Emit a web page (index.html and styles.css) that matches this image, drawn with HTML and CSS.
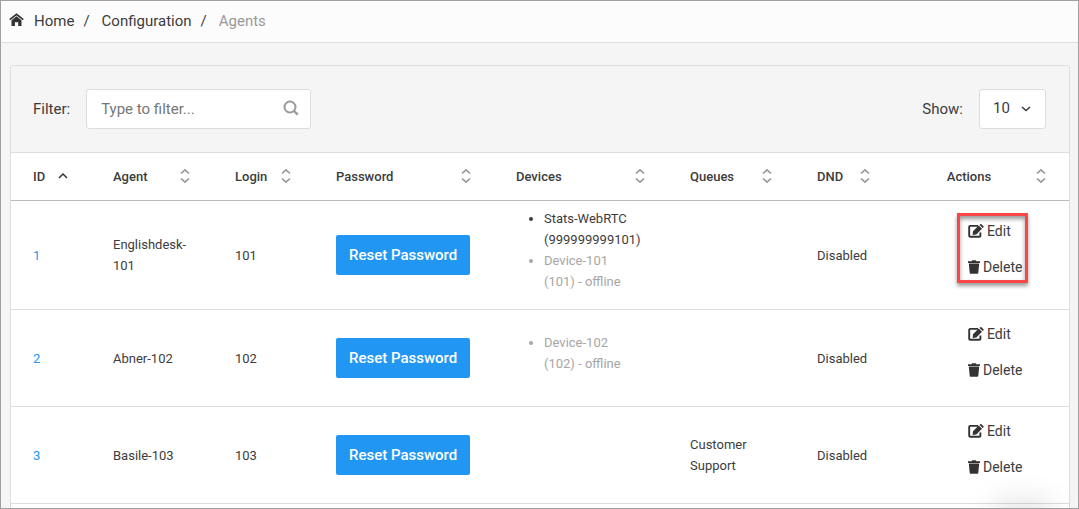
FILE: index.html
```html
<!DOCTYPE html>
<html lang="en">
<head>
<meta charset="utf-8">
<title>Agents</title>
<link rel="stylesheet" href="styles.css">
</head>
<body>
<svg class="defs" aria-hidden="true">
  <symbol id="sort" viewBox="0 0 20 16"><path d="M6 5.500l4-3.700 4 3.700M6 10.500l4 3.700 4-3.700" fill="none" stroke="currentColor" stroke-width="1.700"/></symbol>
  <symbol id="edit" viewBox="0 0 16 14"><path d="M10 1.900H2.200a1 1 0 0 0-1 1v8.900a1 1 0 0 0 1 1h9.200a1 1 0 0 0 1-1V8.500" fill="none" stroke="currentColor" stroke-width="1.900"/><path d="M4.600 10.900l.4-3.700L10.700 1.500l3.300 3.300L8.300 10.400zM11.500 .9l.8-.7a.8.8 0 0 1 1.100 0l2.100 2a.8.8 0 0 1 0 1.100l-.8.800z" fill="currentColor"/></symbol>
  <symbol id="trash" viewBox="0 0 12 14"><path d="M0 1.200h3.500L4.300.2h3.400l.8 1H12v1.700H0zM.8 3.600h10.400l-.9 9.200a1 1 0 0 1-1 .9H2.700a1 1 0 0 1-1-.9z" fill="currentColor"/></symbol>
</svg>
<div class="app">
  <nav class="breadcrumb" aria-label="Breadcrumb">
    <a class="crumb" href="#"><svg class="home" viewBox="0 0 15 14"><path d="M.7 6.700L7.500 1.300l6.800 5.400" fill="none" stroke="currentColor" stroke-width="1.700"/><path d="M2.500 7.300l5-4 5 4V13H9.200V9.300H5.900V13H2.500z" fill="currentColor"/></svg>Home</a>
    <span class="slash">/</span>
    <a class="crumb" href="#">Configuration</a>
    <span class="slash">/</span>
    <span class="current">Agents</span>
  </nav>
  <main class="card">
    <div class="toolbar">
      <label class="field">Filter:
        <span class="search">
          <input type="text" placeholder="Type to filter...">
          <svg class="glass" viewBox="0 0 16 16"><circle cx="7" cy="7" r="5.500" fill="none" stroke="currentColor" stroke-width="2"/><path d="M11 11l3.800 3.600" stroke="currentColor" stroke-width="2.400"/></svg>
        </span>
      </label>
      <label class="field">Show:
        <span class="length">
          <select><option>10</option><option>25</option><option>50</option></select>
          <svg class="caret" viewBox="0 0 10 6"><path d="M1 1l4 3.600L9 1" fill="none" stroke="currentColor" stroke-width="1.500"/></svg>
        </span>
      </label>
    </div>
    <table class="agents">
      <colgroup><col class="c-id"><col class="c-agent"><col class="c-login"><col class="c-password"><col class="c-devices"><col class="c-queues"><col class="c-dnd"><col class="c-actions"></colgroup>
      <thead>
        <tr>
          <th><div class="head sorted"><span>ID</span><svg class="sort" viewBox="0 0 20 16"><path d="M6 10l4-4 4 4" fill="none" stroke="currentColor" stroke-width="1.500"/></svg></div></th>
          <th><div class="head"><span>Agent</span><svg class="sort"><use href="#sort"/></svg></div></th>
          <th><div class="head"><span>Login</span><svg class="sort"><use href="#sort"/></svg></div></th>
          <th><div class="head"><span>Password</span><svg class="sort"><use href="#sort"/></svg></div></th>
          <th><div class="head"><span>Devices</span><svg class="sort"><use href="#sort"/></svg></div></th>
          <th><div class="head"><span>Queues</span><svg class="sort"><use href="#sort"/></svg></div></th>
          <th><div class="head"><span>DND</span><svg class="sort"><use href="#sort"/></svg></div></th>
          <th><div class="head centered"><span>Actions</span><svg class="sort"><use href="#sort"/></svg></div></th>
        </tr>
      </thead>
      <tbody>
        <tr>
          <td><a class="id" href="#">1</a></td>
          <td>Englishdesk-101</td>
          <td>101</td>
          <td><button class="reset" type="button">Reset Password</button></td>
          <td><ul class="devices"><li>Stats-WebRTC (999999999101)</li><li class="offline">Device-101<br>(101) - offline</li></ul></td>
          <td></td>
          <td>Disabled</td>
          <td><div class="actions highlighted"><a href="#"><svg class="edit"><use href="#edit"/></svg>Edit</a><a href="#"><svg class="trash"><use href="#trash"/></svg>Delete</a></div></td>
        </tr>
        <tr>
          <td><a class="id" href="#">2</a></td>
          <td>Abner-102</td>
          <td>102</td>
          <td><button class="reset" type="button">Reset Password</button></td>
          <td><ul class="devices"><li class="offline">Device-102<br>(102) - offline</li></ul></td>
          <td></td>
          <td>Disabled</td>
          <td><div class="actions"><a href="#"><svg class="edit"><use href="#edit"/></svg>Edit</a><a href="#"><svg class="trash"><use href="#trash"/></svg>Delete</a></div></td>
        </tr>
        <tr>
          <td><a class="id" href="#">3</a></td>
          <td>Basile-103</td>
          <td>103</td>
          <td><button class="reset" type="button">Reset Password</button></td>
          <td></td>
          <td>Customer Support</td>
          <td>Disabled</td>
          <td><div class="actions"><a href="#"><svg class="edit"><use href="#edit"/></svg>Edit</a><a href="#"><svg class="trash"><use href="#trash"/></svg>Delete</a></div></td>
        </tr>
      </tbody>
    </table>
  </main>
  <div class="float-shadow"></div>
</div>
</body>
</html>
```
FILE: styles.css
```css
* { box-sizing: border-box; }
body {
  margin: 0;
  font: 15px/22px Roboto, "Liberation Sans", sans-serif;
  color: #3c3c3c;
}
a { color: inherit; text-decoration: none; }
.defs { position: absolute; width: 0; height: 0; }
.app {
  position: relative;
  display: flex;
  flex-direction: column;
  height: 100vh;
  overflow: hidden;
  border: 1px solid #a0a0a0;
  background: #f5f5f5;
}
.breadcrumb {
  display: flex;
  align-items: center;
  flex: none;
  height: 42px;
  padding: 0 8px 2px;
  background: #fcfcfc;
  border-bottom: 1px solid #ddd;
}
.crumb { display: flex; align-items: center; }
.home { width: 15px; height: 14px; margin-right: 10px; margin-bottom: 2px; color: #333; }
.slash { margin: 0 12px 0 9px; }
.current { color: #999; }
.card {
  flex: 1 0 auto;
  margin: 22px 8px 0 9px;
  border: 1px solid #ddd;
  border-bottom: 0;
  border-radius: 3px 3px 0 0;
  background: #fff;
}
.toolbar {
  display: flex;
  justify-content: space-between;
  padding: 23px 23px 23px 22px;
  border-bottom: 1px solid #ddd;
  background: #f5f5f5;
}
.field { display: flex; align-items: center; gap: 16px; }
.search, .length { position: relative; display: block; }
input, select {
  display: block;
  height: 40px;
  padding: 0 14px;
  border: 1px solid #ddd;
  border-radius: 3px;
  background: #fff;
  color: #3c3c3c;
  font: inherit;
}
input { width: 225px; }
input::placeholder { color: #777; }
select { width: 67px; padding: 0 13px 2px; appearance: none; }
.glass { position: absolute; top: 11px; right: 12px; width: 16px; height: 16px; color: #999; }
.caret { position: absolute; top: 17px; right: 15px; width: 10px; height: 6px; }
.agents {
  width: 100%;
  table-layout: fixed;
  border-collapse: separate;
  border-spacing: 0;
  font-size: 13px;
  line-height: 21px;
}
.c-id { width: 82px; }
.c-agent { width: 122px; }
.c-login { width: 101px; }
.c-password { width: 180px; }
.c-devices { width: 174px; }
.c-queues { width: 127px; }
.c-dnd { width: 98px; }
.c-actions { width: 174px; }
th, td { padding: 0 20px; text-align: left; font-weight: 400; vertical-align: middle; }
th { height: 48px; border-bottom: 1px solid #bbb; font-weight: 500; }
td { height: 97px; padding-top: 7px; padding-bottom: 7px; border-bottom: 1px solid #ddd; }
th:first-child, td:first-child { padding-left: 22px; }
th:last-child { padding-right: 18px; }
td:last-child { padding-left: 73px; padding-right: 0; }
.head { display: flex; align-items: center; justify-content: space-between; }
.centered { gap: 8px; }
.centered span { flex: 1; text-align: center; }
.sort { width: 20px; height: 16px; margin-bottom: 2px; color: #999; }
.sorted .sort { color: #333; }
.id { color: #2196f3; }
.reset {
  height: 40px;
  padding: 0 13px;
  border: 0;
  border-radius: 2px;
  background: #2196f3;
  color: #fff;
  font: 500 15px/22px Roboto, "Liberation Sans", sans-serif;
  white-space: nowrap;
  display: block;
}
.devices { margin: 0 0 10px; padding: 0 0 0 28px; }
.offline { color: #a6a6a6; }
.actions {
  position: relative;
  display: grid;
  gap: 12px;
  width: max-content;
  margin-bottom: 12px;
  font-size: 14px;
  line-height: 24px;
}
.actions a { display: flex; align-items: center; gap: 3px; }
.edit { width: 16px; height: 14px; color: #333; }
.trash { width: 12px; height: 14px; color: #333; }
.highlighted::after {
  content: "";
  position: absolute;
  inset: -6px -6px -4px -11px;
  border: 3px solid #f94747;
  box-shadow: 0 3px 4px rgba(0, 0, 0, .4), inset 0 3px 4px rgba(0, 0, 0, .4);
  pointer-events: none;
}
.float-shadow {
  position: absolute;
  right: 28px;
  bottom: -20px;
  width: 56px;
  height: 20px;
  border-radius: 10px;
  box-shadow: 0 0 32px 4px rgba(0, 0, 0, .14);
}
```
